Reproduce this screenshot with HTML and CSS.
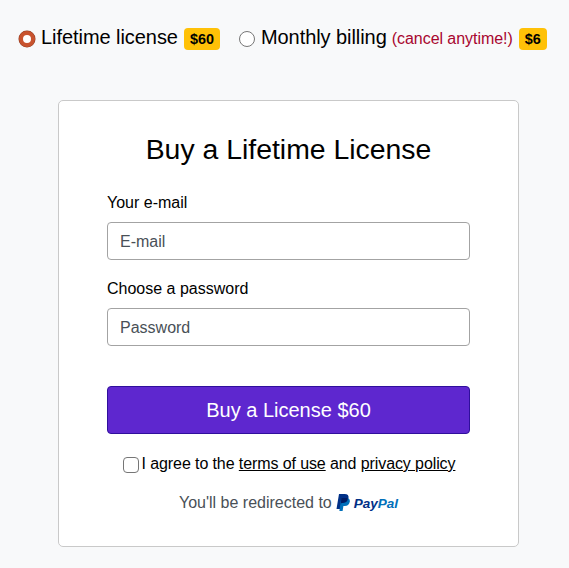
FILE: index.html
```html
<!DOCTYPE html>
<html>
<head>
    <meta charset="UTF-8">
    <title>Buy a License</title>
    <link rel="stylesheet" href="styles.css">
</head>
<body>
    <div class="plans">
        <label class="plan">
            <input type="radio" name="plan" class="plan-radio" checked>
            <span class="plan-name">Lifetime license</span>
            <span class="badge">$60</span>
        </label>
        <label class="plan">
            <input type="radio" name="plan" class="plan-radio">
            <span class="plan-name">Monthly billing</span>
            <small class="cancel">(cancel anytime!)</small>
            <span class="badge">$6</span>
        </label>
    </div>
    <div class="card">
        <h1>Buy a Lifetime License</h1>
        <form>
            <div class="field">
                <label for="email">Your e-mail</label>
                <input type="text" id="email" class="input" placeholder="E-mail">
            </div>
            <div class="field">
                <label for="password">Choose a password</label>
                <input type="text" id="password" class="input" placeholder="Password">
            </div>
            <button type="button" class="buy">Buy a License $60</button>
            <div class="agree">
                <input type="checkbox" class="agree-check">
                <span>I agree to the <a href="#">terms of use</a> and <a href="#">privacy policy</a></span>
            </div>
            <div class="redirect">
                <span>You'll be redirected to</span>
                <svg class="pp-mark" viewBox="0 0 14 17" width="14" height="17">
                    <path fill="#003087" d="M3 0h5.600C11.600 0 13 1.600 12.500 4.200 12 7.300 9.800 8.900 7 8.900H5.300L4.300 15H0.500z"/>
                    <path fill="#0070ba" d="M5.200 4h5.200c2.500 0 3.800 1.500 3.400 3.800-.5 2.800-2.500 4.200-5 4.200H7.400l-.8 5H3.400z"/>
                    <path fill="#001c64" d="M5.200 4h6.500c.5 2.500-1.500 4.900-4.700 4.900H5.300l-.4 2.300z"/>
                </svg>
                <span class="pp-text"><b>Pay</b><b class="pp-light">Pal</b></span>
            </div>
        </form>
    </div>
</body>
</html>
```
FILE: styles.css
```css
body {margin: 0; padding: 0 0 21px; background-color: #f8f9fa; color: #000; font-family: "Liberation Sans", Arial, sans-serif; font-size: 16px;}
.plans {display: flex; gap: 19px; padding: 25px 0 0 19px; height: 100px; box-sizing: border-box; align-items: flex-start;}
.plan {display: flex; align-items: center; font-size: 20px; height: 24px; white-space: nowrap;}
.plan-name {letter-spacing: -0.06px;}
.plan-radio {appearance: none; width: 16px; height: 16px; margin: 3px 6px 0 0; border: 1px solid #777; border-radius: 50%; background: #fff; box-sizing: border-box;}
.plan-radio:checked {border: 4.500px solid #c8532e; box-shadow: inset 0 0 0 1px #fff, 0 0 0 0.500px #8a3a20;}
.badge {background-color: #ffc107; border-radius: 4px; font-size: 14.400px; font-weight: bold; line-height: 22px; padding: 0 6px; margin-left: 6px; margin-top: 3px;}
.cancel {color: #a8062f; font-size: 16px; letter-spacing: -0.05px; margin-left: 5px; margin-top: 3px;}
.card {width: 461px; height: 447px; margin-left: 58px; box-sizing: border-box; padding: 31px 48px 0; background: #fff; border: 1px solid #c9c9c9; border-radius: 5px;}
h1 {margin: 0 0 26px; font-size: 28.400px; font-weight: normal; line-height: 34px; text-align: center;}
.field {margin-bottom: 18px;}
.field label {display: block; line-height: 24px; margin-bottom: 7px; margin-top: -1px;}
.input {display: block; width: 100%; height: 38px; box-sizing: border-box; padding: 1px 12px 0; font: inherit; border: 1px solid #a3a3a3; border-radius: 4px; background: #fff;}
.input::placeholder {color: #495057; opacity: 1;}
.buy {display: block; width: 100%; height: 48px; margin-top: 40px; background-color: #5e27cf; border: 1px solid #2f0f9c; border-radius: 4px; color: #fff; font: inherit; font-size: 20px;}
.agree {display: flex; justify-content: center; align-items: center; margin-top: 18px; padding-left: 1px; line-height: 24px; letter-spacing: -0.1px;}
.agree-check {appearance: none; width: 16px; height: 16px; margin: 2px 3px 0 0; border: 1px solid #767676; border-radius: 4px; background: #fff; box-sizing: border-box;}
.agree a {color: #000; text-decoration: underline;}
.redirect {display: flex; justify-content: center; align-items: center; margin-top: 13px; line-height: 24px; color: #495057;}
.pp-mark {margin-left: 4px;}
.pp-text {font-size: 13.500px; font-style: italic; margin-left: 4px; margin-top: 3px; color: #003087;}
.pp-light {color: #0070ba;}
```
